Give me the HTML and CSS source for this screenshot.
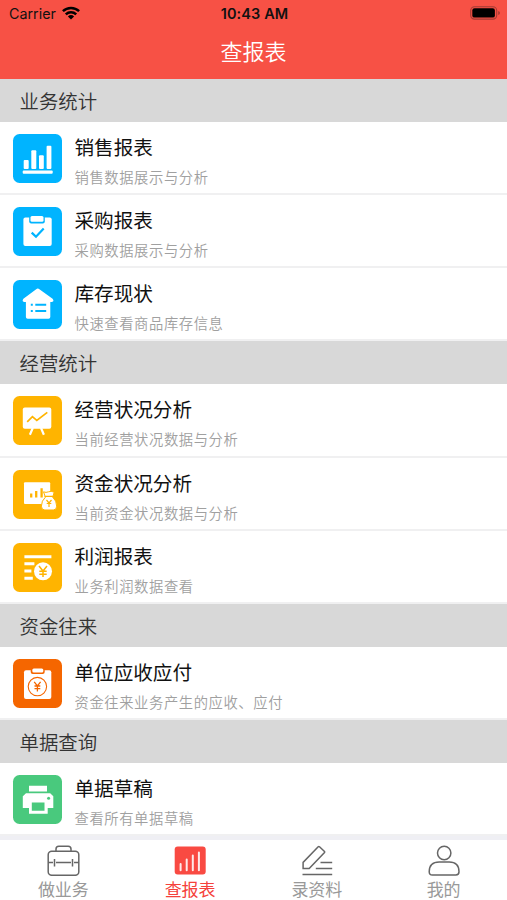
FILE: index.html
```html
<!DOCTYPE html>
<html lang="zh-CN">
<head>
<meta charset="utf-8">
<title>查报表</title>
<link rel="stylesheet" href="styles.css">
</head>
<body>
<div class="app">
  <header class="header">
    <div class="status">
      <div class="carrier"><span>Carrier</span>
        <svg width="18" height="14" viewBox="0 0 18 14" fill="none" stroke="#000" stroke-width="2.5"><path d="M.9 5.2a11.7 11.7 0 0 1 16.2 0M3.8 8.3a7.5 7.5 0 0 1 10.4 0"/><path d="M9 13.6 5.9 10.4a4.5 4.5 0 0 1 6.2 0z" fill="#000" stroke="none"/></svg>
      </div>
      <div class="clock">10:43 AM</div>
      <svg class="battery" width="31" height="14" viewBox="0 0 31 14"><rect x=".7" y=".7" width="26" height="12.4" rx="3.8" fill="none" stroke="#a33b34" stroke-width="1.1"/><rect x="2.3" y="2.2" width="22.6" height="9.4" rx="2.2"/><path d="M28.2 4.9q1.8.7 1.8 2t-1.8 2z" fill="#a33b34"/></svg>
    </div>
    <h1 class="title">查报表</h1>
  </header>

  <main class="list">
    <h2 class="section">业务统计</h2>
    <div class="row">
      <svg class="icon blue" viewBox="0 0 49 49"><g fill="#fff"><rect x="10.7" y="26" width="5" height="9" rx="1"/><rect x="18.3" y="16.3" width="5" height="18.7" rx="1"/><rect x="26" y="21.3" width="4.8" height="13.7" rx="1"/><rect x="33.6" y="11.7" width="4.8" height="23.3" rx="1"/><rect x="9.7" y="36.5" width="30" height="3.2" rx="1"/></g></svg>
      <div class="text"><div class="name">销售报表</div><div class="desc">销售数据展示与分析</div></div>
    </div>
    <div class="row">
      <svg class="icon blue" viewBox="0 0 49 49"><rect x="10.4" y="10.6" width="28.3" height="28.3" rx="2" fill="#fff"/><rect x="16.2" y="8" width="15.6" height="8.4" rx="2" fill="#00b4ff"/><rect x="17.5" y="9" width="13" height="5.8" rx="1.5" fill="#fff"/><path d="m18.7 25.6 4.3 4.2 7.7-8.2" fill="none" stroke="#00b4ff" stroke-width="2.2"/></svg>
      <div class="text"><div class="name">采购报表</div><div class="desc">采购数据展示与分析</div></div>
    </div>
    <div class="row">
      <svg class="icon blue" viewBox="0 0 49 49"><path d="M23.2 9.2q1.6-1.2 3.2 0l13.2 9.5q2 2.7-.7 3.3h-1.6v15q0 1.8-1.8 1.8H14.7q-1.8 0-1.8-1.8V22h-1.8q-2.5-.6-.7-3.3z" fill="#fff"/><path d="M17.8 24.8h2m2.5 0h10.9M17.8 31h2m2.5 0h10.9" stroke="#00b4ff" stroke-width="2"/></svg>
      <div class="text"><div class="name">库存现状</div><div class="desc">快速查看商品库存信息</div></div>
    </div>

    <h2 class="section">经营统计</h2>
    <div class="row">
      <svg class="icon amber" viewBox="0 0 49 49"><rect x="9.8" y="11.5" width="28.5" height="21.3" rx="2" fill="#fff"/><path d="m19.8 32-2.9 6.8M28 32l2.9 6.8" stroke="#fff" stroke-width="2.2"/><path d="m14.2 25.8 5.2-5.1 4.4 3.8 10.5-8.2" fill="none" stroke="#ffb400" stroke-width="1.7"/></svg>
      <div class="text"><div class="name">经营状况分析</div><div class="desc">当前经营状况数据与分析</div></div>
    </div>
    <div class="row">
      <svg class="icon amber" viewBox="0 0 49 49"><rect x="11" y="12.3" width="26.2" height="21.7" rx="1" fill="#fff"/><path d="M18.2 23.4v4.2M23.2 21v6.6M28.6 18.2v9.4" stroke="#ffb400" stroke-width="2.3"/><path d="M30.5 21.8q2.6 1.2 5 0t5.7.4l-1.5 5q4 3.5 4 9 0 3.8-3.4 3.8h-8.5q-3.4 0-3.4-3.8 0-5.5 4-9z" fill="#fff" stroke="#ffb400" stroke-width="1"/><path d="M31.6 26.4h8.6M33.5 30l2.5 3 2.5-3M36 33v4M33.7 33.5h4.6" fill="none" stroke="#ffb400" stroke-width="1.2"/></svg>
      <div class="text"><div class="name">资金状况分析</div><div class="desc">当前资金状况数据与分析</div></div>
    </div>
    <div class="row">
      <svg class="icon amber" viewBox="0 0 49 49"><path d="M11.4 13.7h27M11.4 20.7h10M11.4 28h7M11.4 35.3h8.4" stroke="#fff" stroke-width="3"/><circle cx="30" cy="28.3" r="9" fill="#fff"/><path d="m26 23 4 5 4-5M30 28v6M26.3 28.3h7.4M26.3 31.2h7.4" fill="none" stroke="#ffb400" stroke-width="1.5"/></svg>
      <div class="text"><div class="name">利润报表</div><div class="desc">业务利润数据查看</div></div>
    </div>

    <h2 class="section">资金往来</h2>
    <div class="row">
      <svg class="icon orange" viewBox="0 0 49 49"><rect x="11" y="11.3" width="27.3" height="28.7" rx="2" fill="#fff"/><rect x="17.7" y="8.5" width="14" height="6.6" rx="2" fill="#f56600"/><rect x="19.3" y="9.4" width="11" height="4" rx="1.5" fill="#fff"/><g fill="none" stroke="#f56600"><circle cx="24.4" cy="27.6" r="9.2" stroke-width="1.1"/><path d="m21.2 22.8 3.2 4.2 3.2-4.2M24.4 27v5.4M21.5 27h5.8M21.5 29.7h5.8" stroke-width="1.3"/></g></svg>
      <div class="text"><div class="name">单位应收应付</div><div class="desc">资金往来业务产生的应收、应付</div></div>
    </div>

    <h2 class="section">单据查询</h2>
    <div class="row">
      <svg class="icon green" viewBox="0 0 49 49"><path d="M16 10.7h18v5.8H16zM13 18.2h24.2l3.1 3V33H34.7v5.8H16V33H9.8V21.2z" fill="#fff"/><path d="M18.8 27.5h12.7v8.2H18.8z" fill="#49c97d"/><circle cx="35.6" cy="23.2" r="1.5" fill="#49c97d"/></svg>
      <div class="text"><div class="name">单据草稿</div><div class="desc">查看所有单据草稿</div></div>
    </div>
  </main>

  <nav class="tabs">
    <div class="tab">
      <svg width="34" height="32" viewBox="-1 0 34 32" fill="none" stroke="#666" stroke-width="1.5"><rect x="1.2" y="6.3" width="30.6" height="24" rx="3.5"/><path d="M9 6V4q0-2.8 2.8-2.8h9.4q2.8 0 2.8 2.8v2M1.2 17.5h4.8m3 0h15m3 0h4.8M7.5 14v7.5M25.5 14v7.5"/></svg>
      <span>做业务</span>
    </div>
    <div class="tab active">
      <svg width="34" height="32" viewBox="0 0 34 32"><rect x="1.7" y="1.5" width="31" height="28" rx="3" fill="#f94a42"/><path d="M7.6 19v6.2M13.7 14.5v10.7M19.8 10.5v14.7M25.9 7.5v17.7" stroke="#fff" stroke-width="2" stroke-linecap="round" opacity=".88"/></svg>
      <span>查报表</span>
    </div>
    <div class="tab">
      <svg width="34" height="32" viewBox="0 0 34 32" fill="none" stroke="#666" stroke-width="1.5"><path d="m19.5 1.8 5 4.6q.5.6 0 1.2L9.2 23.5H3.1v-6.1L18.2 1.8q.6-.6 1.3 0zM20.5 17.5h11.7M15.8 23.5h16.4M2.5 29.6h29.7"/></svg>
      <span>录资料</span>
    </div>
    <div class="tab">
      <svg width="34" height="32" viewBox="0 0 34 32" fill="none" stroke="#666" stroke-width="1.5"><circle cx="17.2" cy="8" r="6.7"/><path d="M2.2 26.8Q2.2 17 12.2 17h10Q32 17 32 26.8q0 3.2-3.2 3.2H5.4q-3.2 0-3.2-3.2z"/></svg>
      <span>我的</span>
    </div>
  </nav>
</div>
</body>
</html>
```

FILE: styles.css
```css
* { box-sizing: border-box; }
body {
  margin: 0;
  background: #fff;
  font-family: "Noto Sans CJK SC", sans-serif;
}
.app {
  width: 507px;
  height: 900px;
  display: flex;
  flex-direction: column;
  overflow: hidden;
}
.header {
  height: 79px;
  flex: none;
  background: #f75145;
}
.status {
  height: 27px;
  padding: 0 6px 0 9px;
  display: grid;
  grid-template-columns: 1fr auto 1fr;
  align-items: center;
  font: 500 14.5px/27px Inter, sans-serif;
  color: #111;
}
.carrier { display: flex; align-items: center; gap: 6px; font-weight: 400; font-size: 14.3px; }
.carrier svg { margin-top: -2px; }
.clock { font-weight: 600; font-size: 14.5px; letter-spacing: .1px; margin-left: -1px; }
.battery { justify-self: end; margin-top: -1px; }
.title {
  margin: 0;
  height: 47px;
  line-height: 47px;
  text-align: center;
  color: #fff;
  font-size: 22px;
  font-weight: 350;
}
.list {
  height: 761px;
  flex: none;
  background: #efeff4;
}
.section {
  margin: 0;
  height: 43px;
  padding-left: 19.5px;
  background: #d8d8d8;
  color: #333;
  font-size: 19.4px;
  line-height: 43px;
  font-weight: 350;
}
.row {
  height: 73.15px;
  padding: 12px 13px 0;
  display: flex;
  gap: 12.5px;
  background: #fff;
  border-bottom: 2px solid #f0f0f1;
}
.icon { width: 49px; height: 49px; flex: none; border-radius: 6.5px; }
.blue { background: #00b4ff; }
.amber { background: #ffb400; }
.orange { background: #f56600; }
.green { background: #49c97d; }
.text { display: flex; flex-direction: column; white-space: nowrap; margin-top: -1px; }
.name { font-size: 19.6px; line-height: 28px; color: #111; }
.desc { font-size: 14.3px; line-height: 22px; letter-spacing: .6px; color: #a0a0a0; font-weight: 350; margin-top: 5px; }
.tabs {
  height: 60px;
  flex: none;
  display: grid;
  grid-template-columns: repeat(4, 1fr);
  background: #fff;
}
.tab {
  display: flex;
  flex-direction: column;
  align-items: center;
  padding-top: 5px;
  color: #999;
  font-size: 17px;
  line-height: 24px;
}
.tab svg { display: block; }
.active { color: #f5413b; }
```
